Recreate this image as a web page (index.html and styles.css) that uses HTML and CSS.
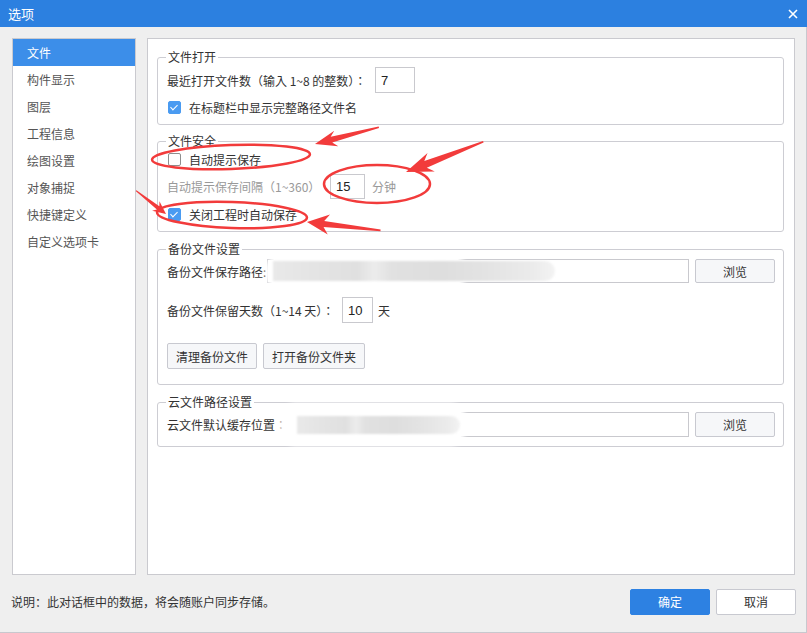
FILE: index.html
```html
<!DOCTYPE html>
<html lang="zh-CN">
<head>
  <meta charset="UTF-8">
  <title>选项</title>
  <link rel="stylesheet" href="styles.css">
</head>
<body>
  <div class="window">
    <div class="titlebar">
      <span class="title">选项</span>
      <svg class="close" width="10" height="10" viewBox="0 0 10 10">
        <path d="M1 1 L9 9 M9 1 L1 9" stroke="#fff" stroke-width="1.6" fill="none"/>
      </svg>
    </div>
    <div class="frame">
      <div class="main">
        <ul class="side">
          <li class="active">文件</li>
          <li>构件显示</li>
          <li>图层</li>
          <li>工程信息</li>
          <li>绘图设置</li>
          <li>对象捕捉</li>
          <li>快捷键定义</li>
          <li>自定义选项卡</li>
        </ul>
        <div class="panel">
          <fieldset class="fs1">
            <legend>文件打开</legend>
            <div class="row h26">
              <span class="lbl w208" lang="zh-TW">最近打开文件数（输入 1~8 的整数）：</span>
              <div class="ipt w40">7</div>
            </div>
            <div class="row h16 mt6">
              <span class="chk on"></span>
              <span>在标题栏中显示完整路径文件名</span>
            </div>
          </fieldset>

          <fieldset class="fs2">
            <legend>文件安全</legend>
            <div class="row h16">
              <span class="chk"></span>
              <span>自动提示保存</span>
            </div>
            <div class="row h25 mt7">
              <span class="lbl w163 dim" lang="zh-TW">自动提示保存间隔（1~360）</span>
              <div class="ipt w35">15</div>
              <span class="unit dim">分钟</span>
            </div>
            <div class="row h16 mt7">
              <span class="chk on"></span>
              <span>关闭工程时自动保存</span>
            </div>
          </fieldset>

          <fieldset class="fs3">
            <legend>备份文件设置</legend>
            <div class="row h24">
              <span class="lbl w100">备份文件保存路径:</span>
              <div class="ipt grow">
                <div class="mask m1"></div>
                <div class="blk b1"></div>
              </div>
              <button class="btn">浏览</button>
            </div>
            <div class="row h26 mt14">
              <span class="lbl w175" lang="zh-TW">备份文件保留天数（1~14 天）：</span>
              <div class="ipt w31">10</div>
              <span class="unit u5">天</span>
            </div>
            <div class="row h26 mt20">
              <button class="btn w90">清理备份文件</button>
              <button class="btn w102">打开备份文件夹</button>
            </div>
          </fieldset>

          <fieldset class="fs4">
            <legend>云文件路径设置</legend>
            <div class="row h25">
              <span class="lbl w126" lang="zh-TW">云文件默认缓存位置：</span>
              <div class="ipt grow">
                <div class="mask m2"></div>
                <div class="blk b2"></div>
              </div>
              <button class="btn">浏览</button>
            </div>
          </fieldset>
        </div>
      </div>
      <div class="footer">
        <span class="note">说明：此对话框中的数据，将会随账户同步存储。</span>
        <button class="ok">确定</button>
        <button class="cancel">取消</button>
      </div>
    </div>

    <svg class="marks" width="807" height="633" viewBox="0 0 807 633">
      <g fill="none" stroke="#f23b3b" stroke-width="2.5">
        <ellipse cx="231" cy="157" rx="79" ry="12" transform="rotate(-2 231 157)"/>
        <ellipse cx="377" cy="184" rx="53" ry="19"/>
        <ellipse cx="232" cy="215" rx="75" ry="13" transform="rotate(2 232 215)"/>
      </g>
      <g fill="#f23b3b">
        <path transform="translate(315 144) rotate(165.3)" d="M-66 -0.8 L-17 -3 L-22 -8 L0 0 L-22 8 L-17 3 L-66 0.8 Z"/>
        <path transform="translate(406 172) rotate(158.7)" d="M-83 -0.8 L-21 -3.5 L-27 -10 L0 0 L-27 10 L-21 3.5 L-83 0.8 Z"/>
        <path transform="translate(166 214) rotate(38)" d="M-38 -0.6 L-10 -2 L-13 -6 L0 0 L-13 6 L-10 2 L-38 0.6 Z"/>
        <path transform="translate(307 222) rotate(186.5)" d="M-74 -0.8 L-17 -3 L-22 -10 L0 0 L-22 10 L-17 3 L-74 0.8 Z"/>
      </g>
    </svg>
  </div>
</body>
</html>
```

FILE: styles.css
```css
html, body{
  margin: 0;
  padding: 0;
}
body{
  background-color: #efefef;
  font-family: "Noto Sans CJK SC", "Liberation Sans", sans-serif;
  font-size: 12px;
  color: #333;
}
.window{
  position: relative;
  width: 807px;
  height: 633px;
  overflow: hidden;
}
.titlebar{
  height: 27px;
  background-color: #2c80e0;
  color: #fff;
  display: flex;
  align-items: center;
  justify-content: space-between;
  padding: 0 9px 0 8px;
  box-sizing: border-box;
}
.title{
  font-size: 13px;
  line-height: 27px;
}
.frame{
  height: 606px;
  box-sizing: border-box;
  border-right: 1px solid #c8c8ce;
  border-bottom: 1px solid #c8c8ce;
}
.main{
  display: flex;
  padding: 11px 0 0 12px;
  height: 548px;
  box-sizing: border-box;
}
.side{
  list-style: none;
  margin: 0;
  padding: 0;
  width: 124px;
  height: 537px;
  box-sizing: border-box;
  background-color: #fff;
  border: 1px solid #cacacf;
}
.side li{
  height: 27px;
  line-height: 27px;
  padding-left: 14px;
  color: #555;
}
.side li.active{
  background-color: #3c8ee9;
  color: #fff;
}
.panel{
  margin-left: 11px;
  width: 648px;
  height: 537px;
  box-sizing: border-box;
  background-color: #fff;
  border: 1px solid #cacacf;
  padding: 10px 10px 0 9px;
}
fieldset{
  margin: 0;
  min-width: 0;
  border: 1px solid #cdcdd3;
  border-radius: 3px;
  padding: 2px 8px 9px 9px;
}
legend{
  padding: 0 2px;
  margin-left: -1px;
  line-height: 16px;
  color: #333;
}
.fs2{
  margin-top: 8px;
}
.fs3, .fs4{
  margin-top: 9px;
}
.fs3{
  padding-bottom: 15px;
}
.row{
  display: flex;
  align-items: center;
}
.h16{ height: 16px; }
.h24{ height: 24px; }
.h25{ height: 25px; }
.h26{ height: 26px; }
.mt6{ margin-top: 6px; }
.mt7{ margin-top: 7px; }
.mt14{ margin-top: 14px; }
.mt20{ margin-top: 20px; }
.lbl{
  white-space: nowrap;
  flex: none;
}
.lbl:lang(zh-TW){
  font-family: "Noto Sans CJK TC", "Liberation Sans", sans-serif;
}
.w100{ width: 100px; }
.w126{ width: 126px; }
.w163{ width: 163px; }
.w175{ width: 175px; }
.w208{ width: 208px; }
.dim{
  color: #999;
}
.ipt{
  position: relative;
  height: 100%;
  box-sizing: border-box;
  border: 1px solid #c9c9ce;
  background-color: #fff;
  font-family: "Liberation Sans", sans-serif;
  font-size: 13px;
  color: #222;
  display: flex;
  align-items: center;
  padding-left: 5px;
  flex: none;
}
.w31{ width: 31px; }
.w35{ width: 35px; }
.w40{ width: 40px; }
.grow{
  flex: 1;
}
.unit{
  margin-left: 7px;
}
.u5{
  margin-left: 5px;
  color: #333;
}
.chk{
  width: 13px;
  height: 13px;
  box-sizing: border-box;
  border: 1px solid #8e8e8e;
  border-radius: 2px;
  background-color: #fff;
  margin: 0 8px 0 1px;
  position: relative;
  flex: none;
}
.chk.on{
  border-color: #4a9bf1;
  background-color: #4a9bf1;
}
.chk.on::after{
  content: "";
  position: absolute;
  left: 3px;
  top: 1px;
  width: 3px;
  height: 6px;
  border: solid #fff;
  border-width: 0 1.6px 1.6px 0;
  transform: rotate(45deg);
}
.btn{
  height: 100%;
  width: 80px;
  margin-left: 6px;
  box-sizing: border-box;
  border: 1px solid #c8c9d0;
  border-radius: 2px;
  background-color: #f6f7f9;
  font-family: inherit;
  font-size: 12px;
  color: #333;
  padding: 0;
}
.w90{
  width: 90px;
  margin-left: 0;
}
.w102{
  width: 102px;
  margin-left: 6px;
}
.mask{
  position: absolute;
  background-color: #fff;
  border-radius: 14px;
  box-shadow: 0 0 4px 3px #fff;
}
.m1{
  left: 0;
  top: -3px;
  width: 196px;
  height: 30px;
}
.m2{
  left: -11px;
  top: -7px;
  width: 180px;
  height: 37px;
}
.blk{
  position: absolute;
  filter: blur(1px);
  border-radius: 0 10px 10px 0;
  background: linear-gradient(90deg, #e9e9e9 0, #e4e4e4 15%, #e0e0e0 30%, #ececec 36%, #e1e1e1 42%, #dedede 60%, #e3e3e3 75%, #ebebeb 92%, #f3f3f3 100%);
}
.b1{
  left: 5px;
  top: 1px;
  width: 282px;
  height: 20px;
}
.b2{
  left: 3px;
  top: 3px;
  width: 163px;
  height: 18px;
}
.footer{
  display: flex;
  align-items: center;
  height: 57px;
  box-sizing: border-box;
  padding: 0 10px 4px 11px;
}
.note{
  flex: 1;
  color: #333;
}
.ok, .cancel{
  width: 80px;
  height: 26px;
  box-sizing: border-box;
  border-radius: 2px;
  font-family: inherit;
  font-size: 12px;
  padding: 0;
}
.ok{
  background-color: #2d81e2;
  border: 1px solid #2d81e2;
  color: #fff;
}
.cancel{
  margin-left: 6px;
  background-color: #fff;
  border: 1px solid #c8c9d0;
  color: #333;
}
.marks{
  position: absolute;
  left: 0;
  top: 0;
  pointer-events: none;
}
```
